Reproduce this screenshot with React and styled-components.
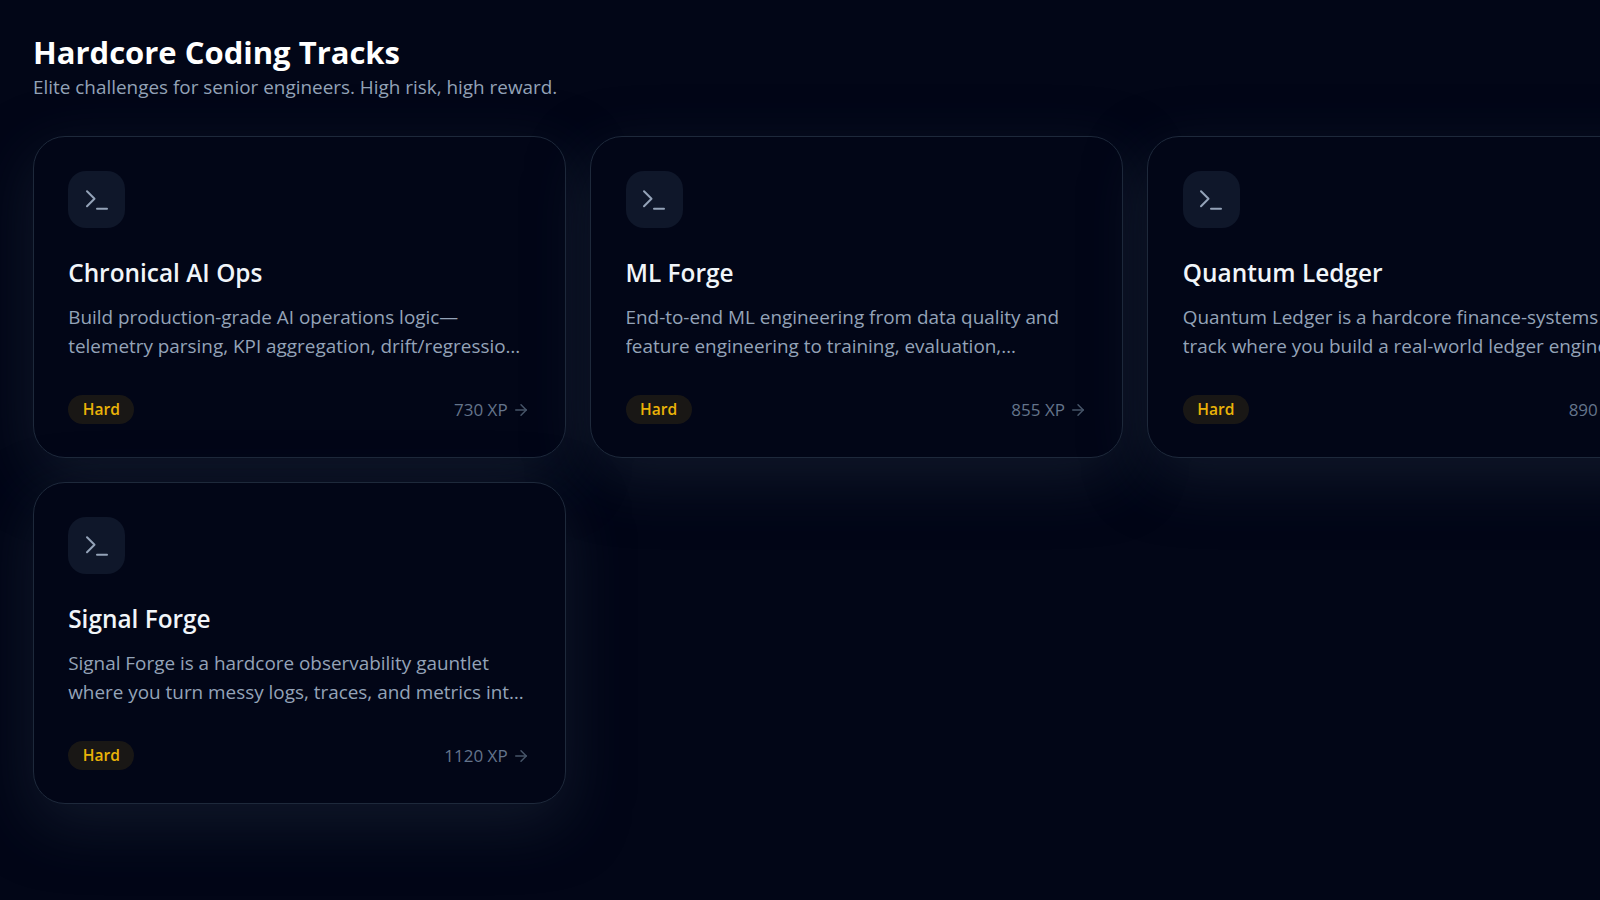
import React from 'react'
import styled, { createGlobalStyle } from 'styled-components'

const GlobalStyle = createGlobalStyle`
  html, body {
    margin: 0;
    padding: 0;
    height: 100%;
    background: #020617;
    overflow: hidden;
  }
  body {
    font-family: "Open Sans", "Noto Sans", "Liberation Sans", sans-serif;
  }
`

const tracks = [
  {
    title: 'Chronical AI Ops',
    description: 'Build production-grade AI operations logic—telemetry parsing, KPI aggregation, drift/regression detection, and automated incident triage.',
    xp: 730,
  },
  {
    title: 'ML Forge',
    description: 'End-to-end ML engineering from data quality and feature engineering to training, evaluation, deployment and monitoring in production.',
    xp: 855,
  },
  {
    title: 'Quantum Ledger',
    description: 'Quantum Ledger is a hardcore finance-systems track where you build a real-world ledger engine with strict consistency guarantees.',
    xp: 890,
  },
  {
    title: 'Signal Forge',
    description: 'Signal Forge is a hardcore observability gauntlet where you turn messy logs, traces, and metrics into actionable signals for on-call teams.',
    xp: 1120,
  },
]

const TerminalIcon = () => (
  <svg width="30" height="30" viewBox="0 0 24 24" fill="none" stroke="currentColor" strokeWidth="1.6" strokeLinecap="round" strokeLinejoin="round">
    <polyline points="4 17 10 11 4 5" />
    <line x1="12" x2="20" y1="19" y2="19" />
  </svg>
)

const ArrowIcon = () => (
  <svg width="18" height="18" viewBox="0 0 24 24" fill="none" stroke="currentColor" strokeWidth="2" strokeLinecap="round" strokeLinejoin="round">
    <path d="M5 12h14" />
    <path d="m12 5 7 7-7 7" />
  </svg>
)

const App = () => (
  <>
    <GlobalStyle />
    <Page>
      <Title>Hardcore Coding Tracks</Title>
      <Subtitle>Elite challenges for senior engineers. High risk, high reward.</Subtitle>
      <Grid>
        {tracks.map((track) => (
          <Card key={track.title}>
            <IconBox>
              <TerminalIcon />
            </IconBox>
            <CardTitle>{track.title}</CardTitle>
            <Description>{track.description}</Description>
            <Footer>
              <Badge>Hard</Badge>
              <Xp>
                {track.xp} XP
                <ArrowWrap>
                  <ArrowIcon />
                </ArrowWrap>
              </Xp>
            </Footer>
          </Card>
        ))}
      </Grid>
    </Page>
  </>
)

export default App

const Page = styled.div`
  width: 1600px;
  height: 900px;
  overflow: hidden;
  box-sizing: border-box;
  padding: 32px 0 0 33px;
  background: #020617;
`

const Title = styled.h1`
  margin: 0;
  font-size: 31px;
  line-height: 40px;
  font-weight: 700;
  color: #ffffff;
`

const Subtitle = styled.p`
  margin: 1px 0 0;
  font-size: 18.9px;
  line-height: 28px;
  color: #94a3b8;
`

const Grid = styled.div`
  display: grid;
  grid-template-columns: repeat(3, 533.33px);
  gap: 24px;
  margin: 35px 0 0 -0.33px;
  width: 1648px;
`

const Card = styled.div`
  box-sizing: border-box;
  height: 322px;
  padding: 34px 35px 0 34.5px;
  border: 1px solid #1e293b;
  border-radius: 32px;
  background: #020617;
  box-shadow: 0 20px 60px rgba(30, 41, 59, 0.5);
`

const IconBox = styled.div`
  width: 57px;
  height: 57px;
  border-radius: 18px;
  background: #0f172a;
  color: #94a3b8;
  display: flex;
  align-items: center;
  justify-content: center;
`

const CardTitle = styled.h3`
  margin: 28.5px 0 0;
  font-size: 24.4px;
  line-height: 32px;
  font-weight: 600;
  color: #f1f5f9;
`

const Description = styled.p`
  margin: 14.5px 0 0;
  font-size: 18.9px;
  line-height: 29px;
  color: #94a3b8;
  display: -webkit-box;
  -webkit-line-clamp: 2;
  -webkit-box-orient: vertical;
  overflow: hidden;
`

const Footer = styled.div`
  display: flex;
  align-items: center;
  justify-content: space-between;
  margin-top: 34px;
`

const Badge = styled.span`
  padding: 4px 14.5px;
  border-radius: 999px;
  background: rgba(234, 179, 8, 0.1);
  color: #eab308;
  font-size: 15.6px;
  line-height: 21px;
  font-weight: 600;
`

const Xp = styled.span`
  display: flex;
  align-items: center;
  gap: 4.4px;
  font-size: 17px;
  line-height: 21px;
  color: #64748b;
`

const ArrowWrap = styled.span`
  display: flex;
  color: #475569;
`
